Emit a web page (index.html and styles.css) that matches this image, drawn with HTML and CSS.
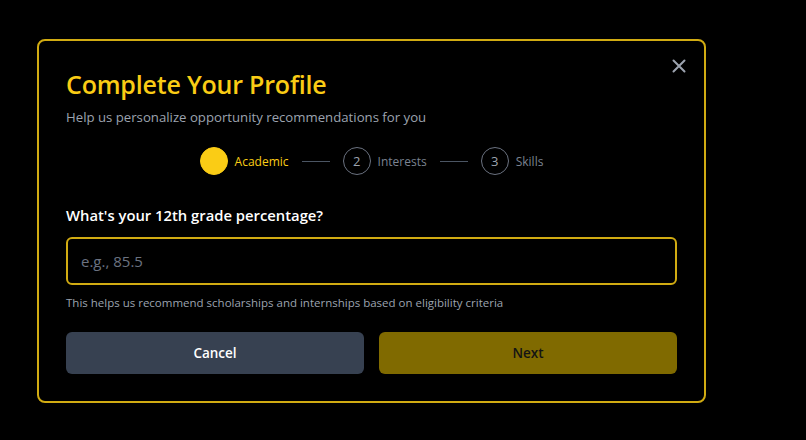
FILE: index.html
```html
<!DOCTYPE html>
<html>
	<head>
		<meta charset="UTF-8">
		<title>Complete Your Profile</title>
		<link rel="stylesheet" href="styles.css">
	</head>
	<body>
		<div class="modal">
			<button class="modal_close" aria-label="Close">
				<svg width="16" height="16" viewBox="0 0 16 16"><path d="M2.5 2.5L13.5 13.5M13.5 2.5L2.5 13.5" stroke="#9ca3af" stroke-width="2" stroke-linecap="round"/></svg>
			</button>
			<h1 class="modal_title">Complete Your Profile</h1>
			<p class="modal_sub">Help us personalize opportunity recommendations for you</p>
			<div class="steps">
				<div class="step active"><span class="step_dot"></span><span class="step_name">Academic</span></div>
				<span class="step_line"></span>
				<div class="step"><span class="step_dot">2</span><span class="step_name">Interests</span></div>
				<span class="step_line"></span>
				<div class="step"><span class="step_dot">3</span><span class="step_name">Skills</span></div>
			</div>
			<label class="field_label" for="grade">What's your 12th grade percentage?</label>
			<input class="field_input" id="grade" type="text" placeholder="e.g., 85.5">
			<p class="field_help">This helps us recommend scholarships and internships based on eligibility criteria</p>
			<div class="actions">
				<button class="btn btn_cancel">Cancel</button>
				<button class="btn btn_next">Next</button>
			</div>
		</div>
	</body>
</html>
```

FILE: styles.css
```css
*{
	margin: 0;
	padding: 0;
	box-sizing: border-box;
}
body{
	background-color: #000;
	font-family: "Open Sans", "Noto Sans", sans-serif;
	padding: 39px 0 0 37px;
}
.modal{
	position: relative;
	width: 669px;
	height: 364px;
	border: 2px solid #d1ab12;
	border-radius: 8px;
	padding: 26px 27px 27px 27px;
}
.modal_close{
	position: absolute;
	top: 17px;
	right: 17px;
	background: none;
	border: none;
	width: 16px;
	height: 16px;
}
.modal_title{
	font-size: 25px;
	line-height: 34px;
	font-weight: 600;
	color: #facc15;
	letter-spacing: -0.2px;
}
.modal_sub{
	margin-top: 6px;
	font-size: 13.2px;
	line-height: 20px;
	color: #9ca3af;
}
.steps{
	display: flex;
	align-items: center;
	justify-content: center;
	margin-top: 19px;
	height: 30px;
}
.step{
	display: flex;
	align-items: center;
	gap: 7px;
}
.step_dot{
	width: 28px;
	height: 28px;
	border-radius: 50%;
	border: 1.5px solid #6b7280;
	display: flex;
	align-items: center;
	justify-content: center;
	font-size: 13px;
	color: #9ca3af;
}
.step_name{
	font-size: 12px;
	color: #7b8391;
}
.step.active .step_dot{
	background: #facc15;
	border-color: #facc15;
}
.step.active .step_name{
	color: #facc15;
}
.step_line{
	width: 28px;
	height: 1px;
	background: #4b5563;
	margin: 0 13px;
}
.field_label{
	display: block;
	margin-top: 28px;
	font-size: 14.8px;
	line-height: 22px;
	font-weight: 600;
	color: #fff;
}
.field_input{
	display: block;
	width: 100%;
	height: 48px;
	margin-top: 11px;
	background: #000;
	border: 2px solid #d1ab12;
	border-radius: 6px;
	padding: 0 13px;
	font-family: inherit;
	font-size: 15px;
	color: #fff;
	outline: none;
}
.field_input::placeholder{
	color: #6b7280;
}
.field_help{
	margin-top: 9px;
	font-size: 11.5px;
	line-height: 18px;
	color: #9ca3af;
}
.actions{
	display: flex;
	gap: 15px;
	margin-top: 20px;
}
.btn{
	flex: 1;
	height: 42px;
	border: none;
	border-radius: 6px;
	font-family: inherit;
	font-size: 13.5px;
	font-weight: 600;
}
.btn_cancel{
	background: #374151;
	color: #fff;
}
.btn_next{
	background: #806a00;
	color: #141414;
}
```
